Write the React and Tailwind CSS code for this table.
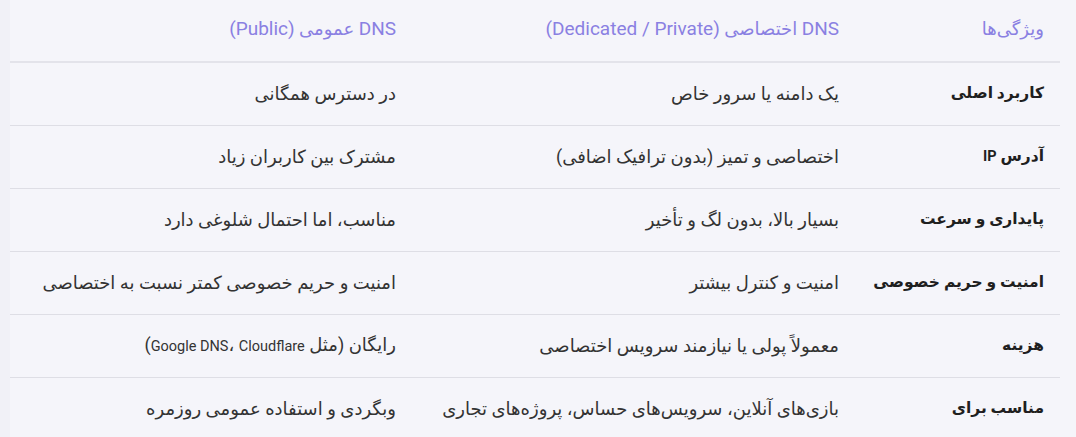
import React from "react";

const L = ({ children }) => <span className="text-[14.5px]">{children}</span>;
const H = ({ children }) => <span className="text-[19px]">{children}</span>;

const rows = [
  ["کاربرد اصلی", "یک دامنه یا سرور خاص", "در دسترس همگانی"],
  [<>آدرس <L>IP</L></>, "اختصاصی و تمیز (بدون ترافیک اضافی)", "مشترک بین کاربران زیاد"],
  ["پایداری و سرعت", "بسیار بالا، بدون لگ و تأخیر", "مناسب، اما احتمال شلوغی دارد"],
  ["امنیت و حریم خصوصی", "امنیت و کنترل بیشتر", "امنیت و حریم خصوصی کمتر نسبت به اختصاصی"],
  ["هزینه", "معمولاً پولی یا نیازمند سرویس اختصاصی", <>رایگان (مثل <L>Google DNS</L>، <L>Cloudflare</L>)</>],
  ["مناسب برای", "بازی‌های آنلاین، سرویس‌های حساس، پروژه‌های تجاری", "وبگردی و استفاده عمومی روزمره"],
];

export default function App() {
  return (
    <div
      className="w-[1076px] h-[437px] overflow-hidden bg-[#f5f5fa] flex"
      style={{ fontFamily: "Roboto, 'DejaVu Sans', sans-serif" }}
    >
      <div className="w-[10px] bg-[#f1f1f7]" />
      <div dir="rtl" className="w-[1050px]">
        <div className="grid grid-cols-[205px_443px_402px] h-[63px] items-center border-b-2 border-[#e3e3ea] text-[#8a80e2] text-[18px] leading-[24px]">
          <div className="px-4 pb-[3px]">ویژگی‌ها</div>
          <div className="px-4 pb-[3px]"><H>DNS</H> اختصاصی <H>(Dedicated / Private)</H></div>
          <div className="px-4 pb-[3px]"><H>DNS</H> عمومی <H>(Public)</H></div>
        </div>
        {rows.map((r, i) => (
          <div
            key={i}
            className="grid grid-cols-[205px_443px_402px] h-[63px] items-center border-b border-[#dedee5]"
          >
            <div className="px-4 text-[15.5px] font-bold text-[#1f1f1f] whitespace-nowrap">{r[0]}</div>
            <div className="px-4 text-[18px] text-[#333] whitespace-nowrap leading-[24px]">{r[1]}</div>
            <div className="px-4 text-[18px] text-[#333] whitespace-nowrap leading-[24px]">{r[2]}</div>
          </div>
        ))}
      </div>
    </div>
  );
}
